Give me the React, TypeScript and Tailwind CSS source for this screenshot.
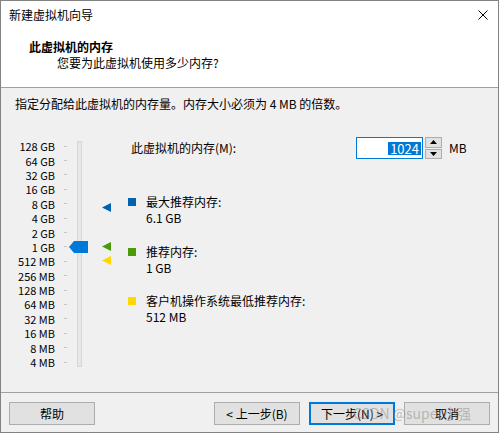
import React from 'react';

const sizes = [
  '128 GB', '64 GB', '32 GB', '16 GB', '8 GB', '4 GB', '2 GB', '1 GB',
  '512 MB', '256 MB', '128 MB', '64 MB', '32 MB', '16 MB', '8 MB', '4 MB',
];

const legend = [
  { color: 'bg-[#0063b1]', title: '最大推荐内存:', value: '6.1 GB', gap: 'mt-[35px]' },
  { color: 'bg-[#4a9a0a]', title: '推荐内存:', value: '1 GB', gap: 'mt-[18px]' },
  { color: 'bg-[#ffd800]', title: '客户机操作系统最低推荐内存:', value: '512 MB', gap: 'mt-[17px]' },
];

function Arrow({ color }: { color: string }) {
  return (
    <svg width="9" height="9" viewBox="0 0 9 9">
      <polygon points="0,4.5 9,0 9,9" fill={color} />
    </svg>
  );
}

function Button({ label, primary }: { label: string; primary?: boolean }) {
  return (
    <button
      className={`w-[86px] h-[23px] bg-[#e1e1e1] text-[12px] text-black flex items-center justify-center ${
        primary ? 'border-2 border-[#0078d7]' : 'border border-[#adadad]'
      }`}
    >
      {label}
    </button>
  );
}

export default function App() {
  return (
    <div className="relative w-[499px] h-[433px] border border-[#828282] bg-[#f0f0f0] flex flex-col text-black font-['Noto_Sans_CJK_SC','Microsoft_YaHei',sans-serif] text-[12px] leading-[16px]">
      {/* header */}
      <div className="h-[87px] bg-white border-b border-[#a0a0a0] flex flex-col">
        <div className="h-[28px] flex items-center justify-between pl-[8px] pr-[10px]">
          <span>新建虚拟机向导</span>
          <svg width="10" height="10" viewBox="0 0 10 10">
            <path d="M0.5 0.5 L9.5 9.5 M9.5 0.5 L0.5 9.5" stroke="#000" strokeWidth="1" />
          </svg>
        </div>
        <div className="mt-[10px] pl-[28px] font-bold">此虚拟机的内存</div>
        <div className="pl-[56px]">您要为此虚拟机使用多少内存?</div>
      </div>

      {/* body */}
      <div className="flex-1 flex flex-col">
        <div className="mt-[8px] pl-[14px]">
          指定分配给此虚拟机的内存量。内存大小必须为 4 MB 的倍数。
        </div>

        <div className="mt-[25px] flex">
          {/* slider */}
          <div className="relative w-[127px] h-[240px] flex">
            <div className="pt-[2px] flex flex-col">
              {sizes.map((s) => (
                <div key={s} className="h-[14.4px] flex items-center overflow-hidden">
                  <span className="w-[54px] text-right text-[11px] leading-[12px]">{s}</span>
                  <span className="ml-[9px] w-[3px] h-px bg-[#c4c4c4]" />
                </div>
              ))}
            </div>
            <div className="ml-[10px] mt-[4px] w-[5px] h-[226px] bg-[#e7e7e7] border border-[#d6d6d6]" />

            <svg className="absolute left-[68px] top-[104px]" width="19" height="12" viewBox="0 0 19 12">
              <polygon points="0,6 5,0 19,0 19,12 5,12" fill="#0078d7" />
            </svg>
            <div className="absolute left-[101px] top-[66px]"><Arrow color="#0063b1" /></div>
            <div className="absolute left-[101px] top-[105px]"><Arrow color="#4a9a0a" /></div>
            <div className="absolute left-[101px] top-[119px]"><Arrow color="#ffd800" /></div>
          </div>

          {/* settings */}
          <div className="flex flex-col">
            <div className="h-[22px] flex items-center">
              <span className="w-[228px] pl-[3px]">此虚拟机的内存(M):</span>
              <div className="w-[67px] h-[22px] border border-[#0078d7] bg-white flex items-center justify-end pr-px">
                <span className="bg-[#0078d7] text-white text-[13px] leading-[13px] h-[13px] px-[2px]">1024</span>
              </div>
              <div className="ml-[2px] w-[17px] h-[22px] flex flex-col gap-px">
                <div className="flex-1 bg-[#e1e1e1] border border-[#adadad] flex items-center justify-center">
                  <svg width="7" height="4" viewBox="0 0 7 4"><polygon points="3.5,0 7,4 0,4" fill="#000" /></svg>
                </div>
                <div className="flex-1 bg-[#e1e1e1] border border-[#adadad] flex items-center justify-center">
                  <svg width="7" height="4" viewBox="0 0 7 4"><polygon points="0,0 7,0 3.5,4" fill="#000" /></svg>
                </div>
              </div>
              <span className="ml-[7px]">MB</span>
            </div>

            {legend.map((l) => (
              <div key={l.title} className={`${l.gap} flex`}>
                <span className={`mt-[4px] w-[8px] h-[8px] ${l.color}`} />
                <div className="ml-[10px] flex flex-col">
                  <span>{l.title}</span>
                  <span>{l.value}</span>
                </div>
              </div>
            ))}
          </div>
        </div>
      </div>

      {/* footer */}
      <div className="h-[40px] border-t border-[#a0a0a0] flex items-start justify-between pt-[9px] pl-[8px] pr-[8px]">
        <Button label="帮助" />
        <div className="flex gap-[9px]">
          <Button label="< 上一步(B)" />
          <Button label="下一步(N) >" primary />
          <Button label="取消" />
        </div>
      </div>

      {/* watermark over the buttons */}
      <span className="absolute left-[352px] top-[403px] text-[14px] leading-[18px] text-[#8a8a8a]/50 pointer-events-none">
        CSDN @super小强
      </span>
    </div>
  );
}
